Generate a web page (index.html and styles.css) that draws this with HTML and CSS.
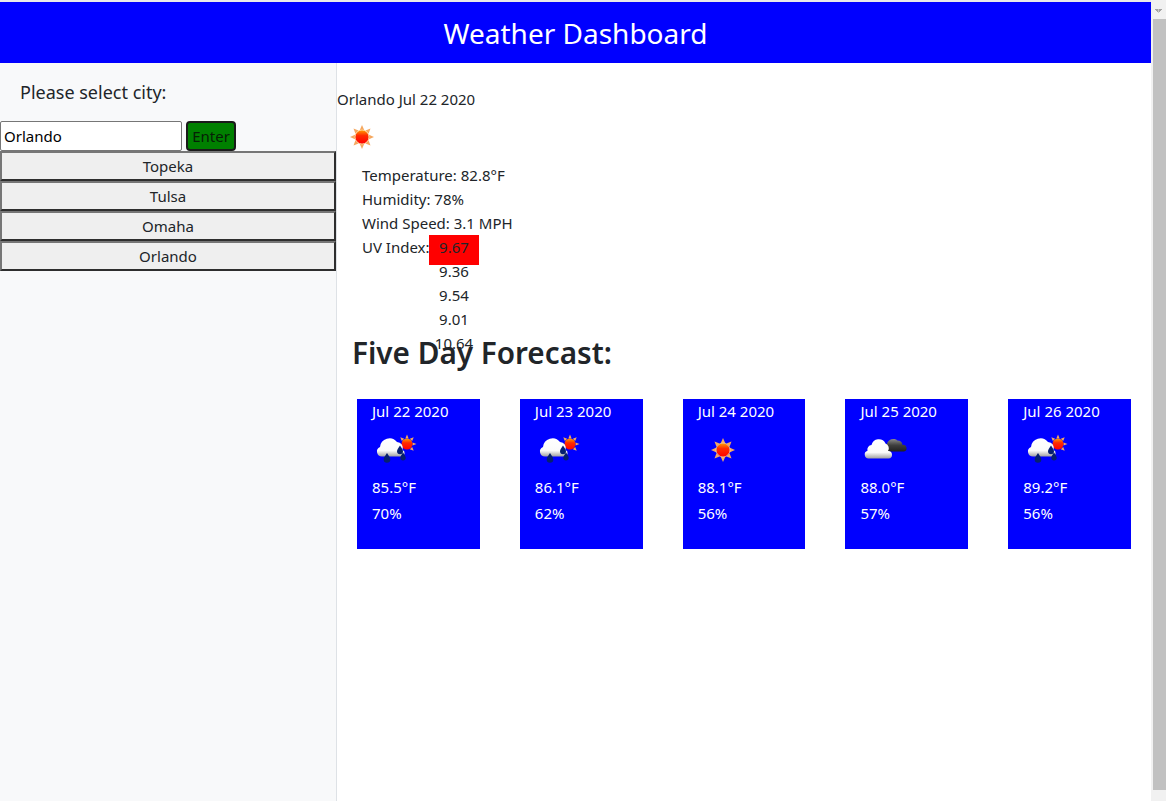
FILE: index.html
```html
<!DOCTYPE html>
<html lang="en">
	<head>
		<meta charset="utf-8">
		<title>Weather Dashboard</title>
		<link rel="stylesheet" href="styles.css">
	</head>
	<body>
		<svg class="defs" width="0" height="0">
			<defs>
				<linearGradient id="sunCore" x1="0" y1="0" x2="0" y2="1">
					<stop offset="0%" stop-color="#ffa000"></stop>
					<stop offset="40%" stop-color="#ff2a00"></stop>
					<stop offset="100%" stop-color="#ff0000"></stop>
				</linearGradient>
				<linearGradient id="cloudWhite" x1="0" y1="0" x2="0" y2="1">
					<stop offset="0%" stop-color="#ffffff"></stop>
					<stop offset="68%" stop-color="#fbfbfb"></stop>
					<stop offset="100%" stop-color="#a0a0a0"></stop>
				</linearGradient>
				<linearGradient id="cloudDark" x1="0" y1="0" x2="0" y2="1">
					<stop offset="0%" stop-color="#8b8b8b"></stop>
					<stop offset="50%" stop-color="#3e3e3e"></stop>
					<stop offset="100%" stop-color="#202020"></stop>
				</linearGradient>
				<symbol id="sun" viewBox="0 0 50 50">
					<g fill="#f5a860">
						<path d="M25 13l2.200 5h-4.400z"></path>
						<path d="M25 37l2.200-5h-4.400z"></path>
						<path d="M13 25l5-2.200v4.400z"></path>
						<path d="M37 25l-5-2.200v4.400z"></path>
						<path d="M16.500 16.500l5 1.900-3.100 3.100z"></path>
						<path d="M33.500 16.500l-5 1.900 3.100 3.100z"></path>
						<path d="M16.500 33.500l5-1.900-3.100-3.100z"></path>
						<path d="M33.500 33.500l-5-1.900 3.100-3.100z"></path>
					</g>
					<circle cx="25" cy="25" r="7" fill="url(#sunCore)" stroke="#ffd9a0" stroke-width="0.800"></circle>
				</symbol>
				<symbol id="rain" viewBox="0 0 50 50">
					<g fill="#f5a860">
						<path d="M35 9.500l1.600 4h-3.200z"></path>
						<path d="M44.500 19l-4 1.600v-3.200z"></path>
						<path d="M28.300 12.300l3.900 1.400-2.400 2.400z"></path>
						<path d="M41.700 12.300l-3.900 1.400 2.400 2.400z"></path>
						<path d="M41.700 25.700l-3.900-1.400 2.400-2.400z"></path>
					</g>
					<circle cx="35" cy="19" r="5.500" fill="url(#sunCore)"></circle>
					<path d="M10 31.500a5 5 0 0 1-2-9.600A9.500 9.500 0 0 1 25 17a6 6 0 0 1 5.500 8 3.400 3.400 0 0 1-.5 6.500z" fill="url(#cloudWhite)"></path>
					<g fill="#06206f">
						<path d="M15 28c2.200 3.400 3.300 4.800 3.300 6.400a3.300 3.300 0 0 1-6.600 0c0-1.600 1.100-3 3.300-6.400z"></path>
						<path d="M28 20.500c2 3.200 3 4.300 3 5.800a3 3 0 0 1-6 0c0-1.500 1-2.600 3-5.800z"></path>
						<path d="M31 27.500c1.800 2.800 2.700 3.900 2.700 5.200a2.700 2.700 0 0 1-5.400 0c0-1.300.9-2.400 2.700-5.200z"></path>
					</g>
				</symbol>
				<symbol id="clouds" viewBox="0 0 50 50">
					<path d="M29 26.500a4 4 0 0 1-2-7.500A6.500 6.500 0 0 1 37.500 15.500a5 5 0 0 1 5 4.500 3.300 3.300 0 0 1 1.500 6.500z" fill="url(#cloudDark)"></path>
					<path d="M8.500 33.500a4 4 0 0 1-1-7.800A4.500 4.500 0 0 1 11.500 20a7.500 7.500 0 0 1 14-1.500 5 5 0 0 1 2.500 7.500 3.600 3.600 0 0 1 .5 7.500z" fill="url(#cloudWhite)"></path>
				</symbol>
			</defs>
		</svg>

		<div class="page">
			<div class="app">
				<header class="banner">Weather Dashboard</header>
				<div class="columns">
					<aside class="sidebar">
						<p class="prompt">Please select city:</p>
						<div class="search">
							<input class="city-input" type="text" value="Orlando">
							<button class="enter-btn">Enter</button>
						</div>
						<button class="city-btn">Topeka</button>
						<button class="city-btn">Tulsa</button>
						<button class="city-btn">Omaha</button>
						<button class="city-btn">Orlando</button>
					</aside>
					<main class="main">
						<section class="current">
							<p class="current-title">Orlando Jul 22 2020</p>
							<svg class="icon"><use href="#sun"></use></svg>
							<div class="stats">
								<p>Temperature: 82.8°F</p>
								<p>Humidity: 78%</p>
								<p>Wind Speed: 3.1 MPH</p>
								<div class="uv-row">
									<span class="uv-label">UV Index:</span>
									<div class="uv-list">
										<span class="uv-value uv-high">9.67</span>
										<span class="uv-value">9.36</span>
										<span class="uv-value">9.54</span>
										<span class="uv-value">9.01</span>
										<span class="uv-value">10.64</span>
									</div>
								</div>
							</div>
						</section>
						<h2 class="forecast-title">Five Day Forecast:</h2>
						<section class="cards">
							<div class="card">
								<p class="card-date">Jul 22 2020</p>
								<svg class="icon"><use href="#rain"></use></svg>
								<p class="card-line">85.5°F</p>
								<p class="card-line">70%</p>
							</div>
							<div class="card">
								<p class="card-date">Jul 23 2020</p>
								<svg class="icon"><use href="#rain"></use></svg>
								<p class="card-line">86.1°F</p>
								<p class="card-line">62%</p>
							</div>
							<div class="card">
								<p class="card-date">Jul 24 2020</p>
								<svg class="icon"><use href="#sun"></use></svg>
								<p class="card-line">88.1°F</p>
								<p class="card-line">56%</p>
							</div>
							<div class="card">
								<p class="card-date">Jul 25 2020</p>
								<svg class="icon"><use href="#clouds"></use></svg>
								<p class="card-line">88.0°F</p>
								<p class="card-line">57%</p>
							</div>
							<div class="card">
								<p class="card-date">Jul 26 2020</p>
								<svg class="icon"><use href="#rain"></use></svg>
								<p class="card-line">89.2°F</p>
								<p class="card-line">56%</p>
							</div>
						</section>
					</main>
				</div>
			</div>
			<div class="scrollbar">
				<div class="scroll-arrow"></div>
				<div class="scroll-thumb"></div>
				<div class="scroll-end"></div>
			</div>
		</div>
	</body>
</html>
```

FILE: styles.css
```css
html, body {
	margin: 0;
	height: 801px;
	overflow: hidden;
}

body {
	font-family: "Noto Sans", sans-serif;
	font-size: 15px;
	line-height: 24px;
	color: #212529;
	background-color: white;
}

p {
	margin: 0;
}

.defs {
	position: absolute;
}

.page {
	display: flex;
	height: 801px;
}

.app {
	flex: 1;
	display: flex;
	flex-direction: column;
	min-width: 0;
	border-top: 2px solid #e9e9e9;
}

.banner {
	height: 61px;
	line-height: 62px;
	text-align: center;
	font-size: 28px;
	color: white;
	background-color: #0000ff;
}

.columns {
	flex: 1;
	display: flex;
}

/* left column */
.sidebar {
	width: 336px;
	background-color: #f8f9fa;
	border-right: 1px solid #dee2e6;
}

.prompt {
	padding: 17px 20px 17px;
	font-size: 18px;
	line-height: 24px;
}

.search {
	display: flex;
	gap: 4px;
	height: 30px;
}

.city-input {
	box-sizing: border-box;
	width: 182px;
	height: 30px;
	padding: 1px 3px;
	font: 15px "Noto Sans", sans-serif;
	color: black;
	background-color: white;
	border: 1px solid #767676;
	border-radius: 2px;
}

.enter-btn {
	box-sizing: border-box;
	width: 50px;
	height: 30px;
	padding: 0;
	font: 15px "Noto Sans", sans-serif;
	color: #062006;
	background-color: #008000;
	border: 2px solid #1a1a1a;
	border-radius: 4px;
}

.city-btn {
	display: block;
	box-sizing: border-box;
	width: 336px;
	height: 30px;
	padding: 0;
	font: 15px "Noto Sans", sans-serif;
	color: #212529;
	background-color: #efefef;
	border: 2px solid #2e2e2e;
	border-top-color: #767676;
	border-left-color: #767676;
}

/* right column */
.main {
	flex: 1;
	min-width: 0;
}

.current {
	height: 273px;
	padding-top: 24px;
	box-sizing: border-box;
}

.current-title {
	height: 25px;
}

.icon {
	display: block;
	width: 50px;
	height: 50px;
}

.current .icon {
	margin-bottom: 1px;
}

.stats {
	padding-left: 25px;
}

.uv-row {
	display: flex;
}

.uv-label {
	width: 67px;
	white-space: nowrap;
}

.uv-list {
	display: flex;
	flex-direction: column;
	width: 50px;
}

.uv-value {
	display: block;
	width: 50px;
	text-align: center;
}

.uv-high {
	height: 30px;
	margin-bottom: -6px;
	background-color: red;
}

.forecast-title {
	margin: -2px 0 0 15px;
	font-size: 29.700px;
	line-height: 38px;
	font-weight: 600;
}

.cards {
	display: flex;
	justify-content: space-between;
	margin: 27px 20px 0;
}

.card {
	box-sizing: border-box;
	width: 122.750px;
	height: 150px;
	padding-left: 15px;
	color: white;
	background-color: #0000ff;
}

.card-date {
	height: 26px;
}

.card .icon {
	margin-bottom: -1px;
}

.card-line {
	height: 26px;
	line-height: 26px;
}

/* hand drawn page scrollbar */
.scrollbar {
	width: 15px;
	display: flex;
	flex-direction: column;
	background-color: #f1f1f1;
}

.scroll-arrow {
	height: 19px;
	background:
		linear-gradient(to top right, transparent 50%, #a3a3a3 50%) no-repeat 4px 9px / 3.500px 4px,
		linear-gradient(to top left, transparent 50%, #a3a3a3 50%) no-repeat 7.500px 9px / 3.500px 4px;
}

.scroll-thumb {
	flex: 1;
	margin-left: 2px;
	background-color: #c1c1c1;
}

.scroll-end {
	height: 11px;
}
```
